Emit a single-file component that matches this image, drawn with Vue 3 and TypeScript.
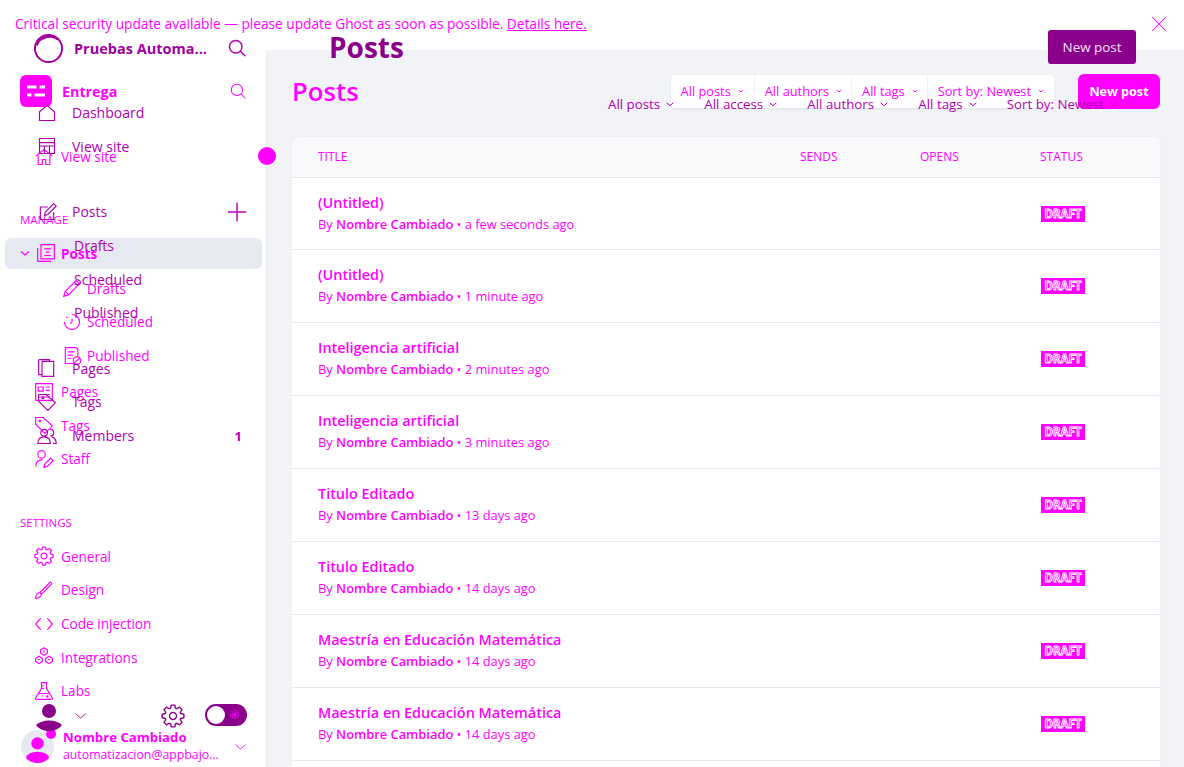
<script setup lang="ts">
const icons: Record<string, string> = {
  search: "M10.5 3a7.5 7.5 0 1 1 0 15a7.5 7.5 0 1 1 0-15z M16 16l6 6",
  house: "M3 10.5 12 3l9 7.5V21H3z",
  home: "M2 11 12 3l10 8 M5 10v11h5v-6h4v6h5V10",
  layout: "M3 3h18v18H3z M3 8h18 M3 12h18 M9 12v9 M15 12v9",
  edit: "M20 12v9H4V6h9 M9 16l1-4L20 2l3 3-10 10z",
  plus: "M12 2v20 M2 12h20",
  stack: "M6 2h16v17H6z M2 6v16h16 M10 7h8 M12 11h4 M10 15h8",
  pencil: "M2 22l2-6L17 3l4 4L8 20z M4 16l4 4 M15 5l4 4",
  clock: "M12 3a9 9 0 1 1-9 9 M12 8v4l-2 2 M5 6l1 1",
  pub: "M15 21H4V2h13l2 2v8 M7 7h8 M7 11h6 M7 15h4 M18 13a4.5 4.5 0 1 1 0 9a4.5 4.5 0 1 1 0-9z M15 20l6-5",
  doc: "M6 4h14v18H6z M2 2h13v2 M2 2v18h4",
  list: "M2 2h20v20H2z M5 6h6v5H5z M14 6h5 M14 10h5 M5 15h14 M5 18h14",
  tag: "M2 3v8l11 11 9-9L11 3z M6 7a1 1 0 1 1 0 .1z",
  group: "M8.500 4a4 4 0 1 1 0 8a4 4 0 1 1 0-8z M1 21c0-5 3-8 7.500-8s7.500 3 7.500 8z M16 4a4 4 0 1 1 0 8 M18 13c3 1 5 4 5 8h-4",
  staff: "M9 2a4.500 4.500 0 1 1 0 9a4.500 4.500 0 1 1 0-9z M2 21c0-5 3-8 8-8 M12 22l1-4 7-7 3 3-7 7z",
  brush: "M2 22c0-4 1-6 5-7l2 2c-1 4-3 5-7 5z M7 15 19 3c1-1 3 1 2 2L9 17",
  code: "M8 5 2 12l6 7 M16 5l6 7-6 7",
  apps: "M12 1l4 2.500v4L12 10 8 7.500v-4z M6 11l4 2.500v4L6 20l-4-2.500v-4z M18 11l4 2.500v4L18 20l-4-2.500v-4z M5 15h2 M17 15h2 M12 4v3",
  flask: "M8 2h8 M9 2v7L2 20c-1 2 0 2 2 2h16c2 0 3 0 2-2L15 9V2 M9 6h3 M9 9h3 M5 15h14 M9 18h2 M16 17v3 M14.500 18.500h3",
  chevron: "M4 9l8 7 8-7",
  close: "M3 3l18 18 M21 3 3 21",
};

// gear outline worked out from a tooth count, same shape everywhere it is used
function gearPath(): string {
  const pts: string[] = [];
  const teeth = 8;
  for (let i = 0; i < teeth; i++) {
    const a = (i / teeth) * Math.PI * 2;
    const step = (Math.PI * 2) / teeth;
    for (const [off, r] of [[-0.3, 8.2], [-0.16, 11], [0.16, 11], [0.3, 8.2]]) {
      const t = a + off * step * 1.3;
      pts.push(`${(12 + Math.cos(t) * r).toFixed(2)} ${(12 + Math.sin(t) * r).toFixed(2)}`);
    }
  }
  return `M${pts.join("L")}z M12 8.500a3.500 3.500 0 1 1 0 7a3.500 3.500 0 1 1 0-7z`;
}
icons.gear = gearPath();

type NavItem = { label: string; icon: string };

const manage: NavItem[] = [
  { label: "Pages", icon: "list" },
  { label: "Tags", icon: "tag" },
  { label: "Staff", icon: "staff" },
];
const sub: NavItem[] = [
  { label: "Drafts", icon: "pencil" },
  { label: "Scheduled", icon: "clock" },
  { label: "Published", icon: "pub" },
];
const settings: NavItem[] = [
  { label: "General", icon: "gear" },
  { label: "Design", icon: "brush" },
  { label: "Code injection", icon: "code" },
  { label: "Integrations", icon: "apps" },
  { label: "Labs", icon: "flask" },
];
const filters = ["All posts", "All authors", "All tags", "Sort by: Newest"];
const ghostFilters = ["All posts", "All access", "All authors", "All tags", "Sort by: Newest"];

const posts = [
  { title: "(Untitled)", ago: "a few seconds ago" },
  { title: "(Untitled)", ago: "1 minute ago" },
  { title: "Inteligencia artificial", ago: "2 minutes ago" },
  { title: "Inteligencia artificial", ago: "3 minutes ago" },
  { title: "Titulo Editado", ago: "13 days ago" },
  { title: "Titulo Editado", ago: "14 days ago" },
  { title: "Maestría en Educación Matemática", ago: "14 days ago" },
  { title: "Maestría en Educación Matemática", ago: "14 days ago" },
];
</script>

<template>
  <div class="page">
    <div class="banner">
      <span>Critical security update available — please update Ghost as soon as possible. <u>Details here.</u></span>
      <svg class="ic close" viewBox="0 0 24 24"><path :d="icons.close" /></svg>
    </div>

    <div class="body">
      <aside class="sidebar">
        <div class="brand">
          <div class="brand-logo">
            <svg viewBox="0 0 24 24"><path d="M3 8h18 M3 16h18" /><path class="cut" d="M14 5v6 M9 13v6" /></svg>
          </div>
          <strong>Entrega</strong>
          <svg class="ic search" viewBox="0 0 24 24"><path :d="icons.search" /></svg>
        </div>
        <div class="nav-row view-site">
          <svg class="ic" viewBox="0 0 24 24"><path :d="icons.home" /></svg>
          <span>View site</span>
        </div>

        <div class="section-title manage-title">MANAGE</div>
        <div class="nav-row active">
          <svg class="ic caret" viewBox="0 0 24 24"><path :d="icons.chevron" /></svg>
          <svg class="ic" viewBox="0 0 24 24"><path :d="icons.stack" /></svg>
          <strong>Posts</strong>
        </div>
        <div v-for="item in sub" :key="item.label" class="nav-row sub">
          <svg class="ic" viewBox="0 0 24 24"><path :d="icons[item.icon]" /></svg>
          <span>{{ item.label }}</span>
        </div>
        <div class="manage-rest">
          <div v-for="item in manage" :key="item.label" class="nav-row">
            <svg class="ic" viewBox="0 0 24 24"><path :d="icons[item.icon]" /></svg>
            <span>{{ item.label }}</span>
          </div>
        </div>

        <div class="section-title settings-title">SETTINGS</div>
        <div v-for="item in settings" :key="item.label" class="nav-row">
          <svg class="ic" viewBox="0 0 24 24"><path :d="icons[item.icon]" /></svg>
          <span>{{ item.label }}</span>
        </div>

        <div class="user">
          <div class="avatar">
            <svg viewBox="0 0 32 32"><circle cx="16" cy="13" r="6" /><ellipse cx="16" cy="27" rx="11" ry="6" /></svg>
          </div>
          <div class="user-text">
            <strong>Nombre Cambiado</strong>
            <span>automatizacion@appbajo...</span>
          </div>
          <svg class="ic user-caret" viewBox="0 0 24 24"><path :d="icons.chevron" /></svg>
        </div>
        <i class="resize-dot"></i>
      </aside>

      <main class="main">
        <header class="head">
          <h1>Posts</h1>
          <div class="filters">
            <div v-for="f in filters" :key="f" class="filter">
              {{ f }}
              <svg class="ic tiny" viewBox="0 0 24 24"><path :d="icons.chevron" /></svg>
            </div>
          </div>
          <button class="new-post">New post</button>
        </header>

        <section class="table">
          <div class="thead">
            <span class="col-title">TITLE</span>
            <span class="col-num">SENDS</span>
            <span class="col-num">OPENS</span>
            <span class="col-status">STATUS</span>
          </div>
          <div v-for="(p, i) in posts" :key="i" class="row">
            <div class="col-title">
              <div class="post-title">{{ p.title }}</div>
              <div class="post-meta">By <b>Nombre Cambiado</b> • {{ p.ago }}</div>
            </div>
            <span class="col-num"></span>
            <span class="col-num"></span>
            <span class="col-status"><em class="draft">DRAFT</em></span>
          </div>
        </section>
      </main>
    </div>

    <!-- second copy of the app lying over the first one -->
    <div class="ghost">
      <div class="g-side">
        <div class="g-brand">
          <svg class="g-logo" viewBox="0 0 32 32"><circle cx="16" cy="16" r="14" /><path d="M4 13c2-9 16-12 22-6" /></svg>
          <strong>Pruebas Automa...</strong>
          <svg class="ic g-search" viewBox="0 0 24 24"><path :d="icons.search" /></svg>
        </div>
        <div class="g-row g-first"><svg class="ic" viewBox="0 0 24 24"><path :d="icons.house" /></svg><span>Dashboard</span></div>
        <div class="g-row"><svg class="ic" viewBox="0 0 24 24"><path :d="icons.layout" /></svg><span>View site</span></div>
        <div class="g-row g-gap">
          <svg class="ic" viewBox="0 0 24 24"><path :d="icons.edit" /></svg><span>Posts</span>
          <svg class="ic g-plus" viewBox="0 0 24 24"><path :d="icons.plus" /></svg>
        </div>
        <div class="g-row g-sub"><span>Drafts</span></div>
        <div class="g-row g-sub"><span>Scheduled</span></div>
        <div class="g-row g-sub"><span>Published</span></div>
        <div class="g-row g-gap2"><svg class="ic" viewBox="0 0 24 24"><path :d="icons.doc" /></svg><span>Pages</span></div>
        <div class="g-row"><svg class="ic" viewBox="0 0 24 24"><path :d="icons.tag" /></svg><span>Tags</span></div>
        <div class="g-row">
          <svg class="ic" viewBox="0 0 24 24"><path :d="icons.group" /></svg><span>Members</span>
          <b class="g-count">1</b>
        </div>
        <div class="g-foot">
          <svg class="g-user" viewBox="0 0 28 36">
            <circle cx="16" cy="30" r="5" class="g-user-low" />
            <circle cx="14" cy="7" r="7" />
            <path d="M1 21c6-6 20-6 26 0-6 8-20 8-26 0z" />
          </svg>
          <svg class="ic g-foot-caret" viewBox="0 0 24 24"><path :d="icons.chevron" /></svg>
          <svg class="ic g-gear" viewBox="0 0 24 24"><path :d="icons.gear" /></svg>
          <div class="g-toggle"><i></i><svg viewBox="0 0 12 12"><path d="M6 1v10 M1 6h10 M2.500 2.500l7 7 M9.500 2.500l-7 7" /></svg></div>
        </div>
      </div>
      <div class="g-main">
        <div class="g-head">
          <h2>Posts</h2>
          <button>New post</button>
        </div>
        <div class="g-filters">
          <span v-for="f in ghostFilters" :key="f">
            {{ f }}
            <svg class="ic tiny" viewBox="0 0 24 24"><path :d="icons.chevron" /></svg>
          </span>
        </div>
      </div>
    </div>
  </div>
</template>

<style scoped>
.page {
  position: relative;
  width: 1184px;
  height: 767px;
  overflow: hidden;
  background: #fff;
  color: #ff00ff;
  font-family: "Open Sans", "Noto Sans", sans-serif;
  font-size: 13.6px;
}
.ic {
  width: 20px;
  height: 20px;
  flex: none;
  fill: none;
  stroke: #ff00ff;
  stroke-width: 1.4;
}
.tiny {
  width: 6px;
  height: 6px;
  stroke-width: 4;
}
.banner {
  height: 50px;
  display: flex;
  align-items: flex-start;
  justify-content: space-between;
  padding: 15px 16px 0 15px;
  box-sizing: border-box;
  font-size: 13.7px;
  line-height: 18px;
}
.close {
  width: 18px;
  height: 18px;
}
.body {
  display: flex;
  height: 717px;
}

.sidebar {
  position: relative;
  width: 267px;
  flex: none;
  display: flex;
  flex-direction: column;
  box-sizing: border-box;
  padding: 25px 4px 0 5px;
  border-right: 1px solid #e6e9ef;
}
.brand {
  display: flex;
  align-items: center;
  height: 32px;
  padding: 0 15px 0 15px;
  gap: 10px;
  font-size: 14.3px;
}
.brand-logo {
  width: 32px;
  height: 32px;
  border-radius: 6px;
  background: #ff00ff;
  display: flex;
  align-items: center;
  justify-content: center;
}
.brand-logo svg {
  width: 24px;
  height: 24px;
  fill: none;
  stroke: #fff;
  stroke-width: 3;
}
.brand-logo .cut {
  stroke: #ff00ff;
  stroke-width: 3;
}
.search {
  margin-left: auto;
  width: 18px;
  height: 18px;
}
.nav-row {
  display: flex;
  align-items: center;
  height: 33.6px;
  padding-left: 29px;
  gap: 7px;
  box-sizing: border-box;
  flex: none;
}
.view-site {
  margin-top: 33px;
}
.section-title {
  font-size: 11.5px;
  padding-left: 15px;
  line-height: 16px;
}
.manage-title {
  margin-top: 38px;
  height: 18px;
  margin-bottom: 8px;
}
.settings-title {
  margin-top: 39px;
  height: 17px;
  margin-bottom: 8px;
}
.active {
  background: #e6e9f1;
  border-radius: 6px;
  height: 31px;
  padding-left: 14px;
  margin-bottom: 3px;
  gap: 5px;
}
.caret {
  width: 12px;
  height: 12px;
  stroke-width: 2.4;
}
.sub {
  padding-left: 57px;
  gap: 5px;
}
.manage-rest {
  margin-top: 2.4px;
}
.user {
  margin-top: auto;
  display: flex;
  align-items: center;
  height: 38px;
  padding-left: 16px;
  margin-bottom: 2px;
  gap: 9px;
}
.avatar {
  width: 33px;
  height: 33px;
  border-radius: 50%;
  background: #e6e9f1;
  overflow: hidden;
  flex: none;
}
.avatar svg {
  fill: #ff00ff;
  display: block;
}
.user-text {
  display: flex;
  flex-direction: column;
  line-height: 18px;
  font-size: 12.3px;
  white-space: nowrap;
}
.user-text strong {
  font-size: 13.2px;
}
.user-caret {
  width: 15px;
  height: 15px;
  margin-left: 5px;
}
.resize-dot {
  position: absolute;
  right: -10px;
  top: 97px;
  width: 18px;
  height: 18px;
  border-radius: 50%;
  background: #ff00ff;
}

.main {
  flex: 1;
  background: #f1f3f6;
  padding: 24px 24px 0 25px;
  box-sizing: border-box;
  min-width: 0;
}
.head {
  display: flex;
  align-items: center;
  height: 35px;
}
h1 {
  margin: 0;
  font-size: 25.7px;
  font-weight: 600;
  margin-right: auto;
}
.filters {
  display: flex;
  height: 33px;
  background: #fff;
  border-radius: 4px;
  box-shadow: 0 1px 2px rgba(120, 130, 150, 0.15);
}
.filter {
  display: flex;
  align-items: center;
  gap: 7px;
  padding: 0 10px 2px;
  border-left: 1px solid #eef0f4;
  white-space: nowrap;
  font-size: 12.8px;
}
.filter:first-child {
  border-left: 0;
}
.filter:nth-child(2),
.filter:nth-child(3) {
  padding-right: 9px;
}
.new-post {
  margin-left: 24px;
  width: 82px;
  height: 35px;
  background: #ff00ff;
  color: #fff;
  border: 0;
  border-radius: 6px;
  font: 700 12.6px "Open Sans", sans-serif;
}
.table {
  margin-top: 28px;
  padding-bottom: 20px;
  background: #fff;
  border-radius: 6px 6px 0 0;
  box-shadow: 0 0 1px rgba(120, 130, 150, 0.25);
  font-size: 12.85px;
}
.thead,
.row {
  display: grid;
  grid-template-columns: 482px 120px 120px 1fr;
  padding-left: 26px;
  box-sizing: border-box;
  border-bottom: 1px solid #e6e9ef;
}
.thead {
  height: 41px;
  padding-bottom: 2px;
  align-items: center;
  background: #f8f9fb;
  border-radius: 6px 6px 0 0;
  font-size: 12px;
  font-weight: 500;
}
.row {
  height: 73px;
  padding-top: 15px;
}
.row:nth-child(2) {
  height: 72px;
}
.post-title {
  font-size: 14.4px;
  font-weight: 600;
  line-height: 20px;
}
.post-meta {
  margin-top: 3px;
  line-height: 17px;
}
.post-meta b {
  font-weight: 600;
}
.col-status {
  padding-top: 11px;
}
.thead .col-status {
  padding-top: 0;
}
.draft {
  display: inline-block;
  width: 44px;
  height: 16px;
  margin-left: 1px;
  background: #ff00ff;
  color: #ff00ff;
  -webkit-text-stroke: 0.9px #fff;
  font-style: normal;
  font-weight: 700;
  font-size: 11.5px;
  line-height: 16px;
  text-align: center;
}

.ghost {
  position: absolute;
  inset: 0;
  display: flex;
  pointer-events: none;
  color: #b000b0;
}
.ghost .ic {
  stroke: #b000b0;
}
.g-side {
  position: relative;
  width: 267px;
  flex: none;
  display: flex;
  flex-direction: column;
  padding: 34px 0 0 37px;
  box-sizing: border-box;
  font-size: 14px;
}
.g-brand {
  display: flex;
  align-items: center;
  height: 28px;
  gap: 10px;
  margin-left: -4px;
  color: #a000a0;
}
.g-brand strong {
  font-size: 14.5px;
}
.g-logo {
  width: 31px;
  height: 31px;
  fill: none;
  stroke: #a000a0;
  stroke-width: 2;
  flex: none;
}
.g-search {
  margin-left: 10px;
  stroke-width: 1.8;
}
.g-row {
  display: flex;
  align-items: center;
  gap: 15px;
  height: 33.6px;
  flex: none;
  padding-right: 19px;
}
.g-first {
  margin-top: 34px;
}
.g-gap {
  margin-top: 32px;
}
.g-plus {
  margin-left: auto;
  width: 22px;
  height: 22px;
  stroke: #c000c0 !important;
  stroke-width: 1.6;
}
.g-sub {
  padding-left: 37px;
}
.g-gap2 {
  margin-top: 22px;
}
.g-count {
  margin-left: auto;
  margin-right: 6px;
  font-size: 13px;
}
.g-foot {
  display: flex;
  align-items: flex-start;
  margin-top: auto;
  height: 63px;
}
.g-user {
  width: 28px;
  height: 36px;
  margin-left: -2px;
  fill: #8b008b;
}
.g-user-low {
  fill: #ff00ff;
}
.g-foot-caret {
  width: 15px;
  height: 15px;
  stroke: #8b008b !important;
  margin: 4px 0 0 10px;
}
.g-gear {
  width: 24px;
  height: 24px;
  stroke: #8b008b !important;
  margin-left: 73px;
}
.g-toggle {
  width: 42px;
  height: 22px;
  margin-left: 20px;
  border-radius: 11px;
  background: #8b008b;
  display: flex;
  align-items: center;
  justify-content: space-between;
  padding: 0 6px 0 2px;
  box-sizing: border-box;
}
.g-toggle i {
  width: 18px;
  height: 18px;
  border-radius: 50%;
  background: #fff;
}
.g-toggle svg {
  width: 12px;
  height: 12px;
  stroke: #ff00ff;
  stroke-width: 1.5;
  stroke-dasharray: 1.5 1;
}
.g-main {
  flex: 1;
  padding: 30px 48px 0 62px;
  min-width: 0;
  display: flex;
  flex-direction: column;
}
.g-head {
  display: flex;
  align-items: center;
  justify-content: space-between;
  height: 34px;
}
h2 {
  margin: 0;
  font-size: 28px;
  font-weight: 700;
  color: #8b008b;
}
.g-head button {
  width: 88px;
  height: 34px;
  background: #8b008b;
  color: #f8e0f8;
  border: 0;
  border-radius: 3px;
  font: 500 13.4px "Open Sans", sans-serif;
}
.g-filters {
  display: flex;
  margin-top: 31px;
  margin-left: 279px;
  gap: 29.2px;
  font-size: 13.3px;
  white-space: nowrap;
  line-height: 18px;
}
.g-filters span {
  display: flex;
  align-items: center;
  gap: 5px;
}
.g-filters .tiny {
  width: 10px;
  height: 10px;
  stroke-width: 2.4;
}
</style>
